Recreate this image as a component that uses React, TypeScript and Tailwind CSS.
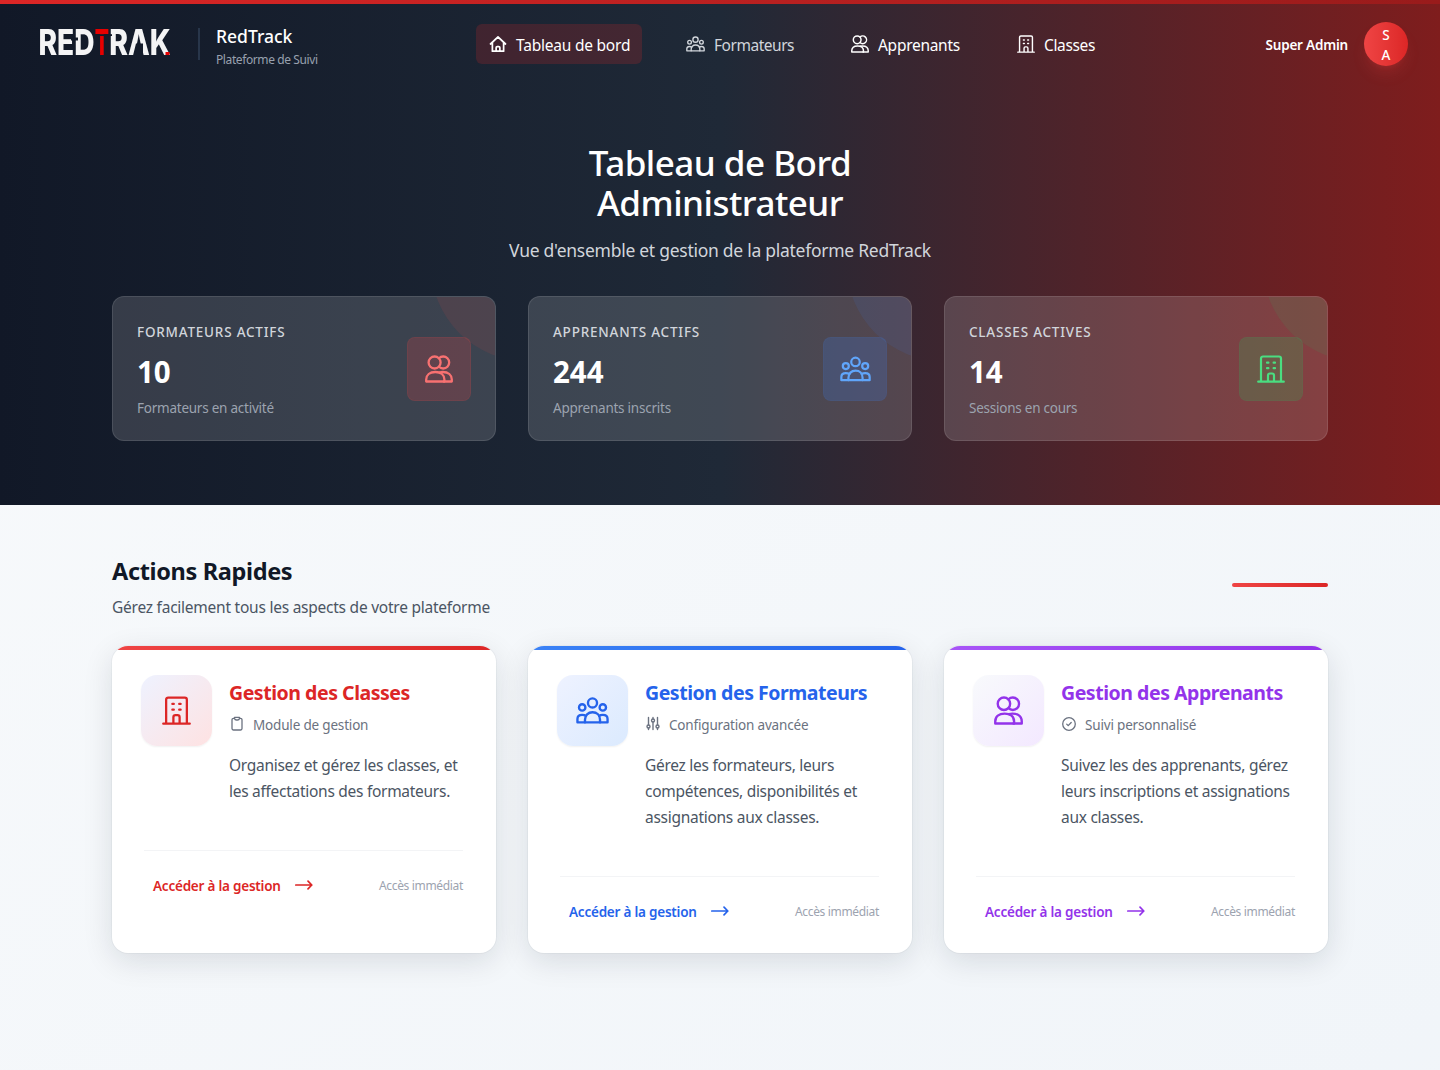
import React from "react";

type IconProps = { className?: string };

const stroke = {
  fill: "none",
  stroke: "currentColor",
  strokeLinecap: "round" as const,
  strokeLinejoin: "round" as const,
};

const HomeIcon = ({ className }: IconProps) => (
  <svg {...stroke} viewBox="0 0 24 24" strokeWidth={2.3} className={className}>
    <path d="M2 12 12 2.500 22 12M4.500 10v11.500h15V10M9.500 21.500V17a1.500 1.500 0 0 1 1.500-1.500h2A1.500 1.500 0 0 1 14.500 17v4.500" />
  </svg>
);

const GroupIcon = ({ className }: IconProps) => (
  <svg {...stroke} viewBox="0 0 32 26" className={`stroke-[2.3] ${className}`}>
    <circle cx="16" cy="5.700" r="4.400" />
    <circle cx="6" cy="10" r="3.100" />
    <circle cx="26" cy="10" r="3.100" />
    <path d="M8.700 24.500v-2.500c0-4.300 3-7.300 7.300-7.300s7.300 3 7.300 7.300v2.500z" />
    <path d="M8.700 24.500H1.400v-3.300c0-2.600 1.800-3.900 4.600-3.900 1.600 0 2.800.3 3.600 1M23.300 24.500h7.300v-3.300c0-2.600-1.800-3.900-4.600-3.900-1.600 0-2.800.3-3.600 1" />
  </svg>
);

const UsersIcon = ({ className }: IconProps) => (
  <svg {...stroke} viewBox="0 0 28 28" className={`stroke-[2.3] ${className}`}>
    <circle cx="9.600" cy="7.500" r="6" />
    <path d="M14 3.200a6 6 0 1 1 0 8.600" />
    <path d="M1.200 26.500v-2c0-4.500 3.600-7.500 9.100-7.500s9.100 3 9.100 7.500v2z" />
    <path d="M14.500 17.500c1-.3 2.100-.5 3.200-.5 5.500 0 9.100 3 9.100 7.500v2h-8" />
  </svg>
);

const BuildingIcon = ({ className }: IconProps) => (
  <svg {...stroke} viewBox="0 0 28 28" className={`stroke-[2.2] ${className}`}>
    <path d="M1.200 26.700h25.600M4 26.700V3.500a2 2 0 0 1 2-2h16a2 2 0 0 1 2 2v23.200M11 26.700v-6.200a2 2 0 0 1 2-2h2a2 2 0 0 1 2 2v6.200" />
    <path d="M10 7.700h1.400M16.600 7.700H18M10 13.200h1.400M16.600 13.200H18" />
  </svg>
);

const ClipboardIcon = ({ className }: IconProps) => (
  <svg {...stroke} viewBox="0 0 16 16" strokeWidth={1.300} className={className}>
    <path d="M5.500 2.300h-1A1.500 1.500 0 0 0 3 3.800v8.700A1.500 1.500 0 0 0 4.500 14h7a1.500 1.500 0 0 0 1.500-1.500V3.800a1.500 1.500 0 0 0-1.500-1.500h-1" />
    <path d="M5.500 1.300h5V2.500a2 2 0 0 1-2 1.500h-1a2 2 0 0 1-2-1.500z" />
  </svg>
);

const SlidersIcon = ({ className }: IconProps) => (
  <svg {...stroke} viewBox="0 0 16 16" strokeWidth={1.400} className={className}>
    <path d="M3.500 1.500v7.200M3.500 12.300v1.200M8 1.500v1.300M8 6v7.500M12.500 1.500v7.200M12.500 12.300v1.200" />
    <circle cx="3.500" cy="10.500" r="1.500" />
    <circle cx="8" cy="4.500" r="1.500" />
    <circle cx="12.500" cy="10.500" r="1.500" />
  </svg>
);

const CheckIcon = ({ className }: IconProps) => (
  <svg {...stroke} viewBox="0 0 16 16" strokeWidth={1.300} className={className}>
    <circle cx="8" cy="8" r="6.300" />
    <path d="m5.700 8.100 1.500 1.500 3-3.100" />
  </svg>
);

const ArrowIcon = ({ className }: IconProps) => (
  <svg {...stroke} viewBox="0 0 20 16" strokeWidth={1.700} className={className}>
    <path d="M1.800 8h16M14 4.200 17.800 8 14 11.800" />
  </svg>
);

const Logo = () => (
  <svg viewBox="0 0 130 26" className="h-[26px] w-[130px] shrink-0 overflow-visible font-['Inter'] text-[35.500px] font-extrabold">
    <mask id="stencil" maskUnits="userSpaceOnUse" x="-2" y="-10" width="140" height="46">
      <rect x="-2" y="-10" width="140" height="46" fill="white" />
      <rect x="31" y="8.500" width="7" height="3" fill="black" />
      <rect x="53" y="5.200" width="19" height="1.800" fill="black" />
      <path d="M96 14.500h7v12H93z" fill="black" />
    </mask>
    <g mask="url(#stencil)">
      <text x="-1.500" y="26" textLength="56" lengthAdjust="spacingAndGlyphs" fill="#f4f4f5">RED</text>
      <text x="54.700" y="26" textLength="14.300" lengthAdjust="spacingAndGlyphs" fill="#e60000">T</text>
      <text x="69.200" y="26" textLength="61.500" lengthAdjust="spacingAndGlyphs" fill="#f4f4f5">RAK</text>
    </g>
    <rect x="125.500" y="23" width="4" height="3" fill="#e60000" />
  </svg>
);

const nav = [
  { label: "Tableau de bord", Icon: HomeIcon, box: "w-[166px] bg-[#dc2626]/20 text-white", icon: "size-[18px]", ls: "tracking-[-0.220px]" },
  { label: "Formateurs", Icon: GroupIcon, box: "w-[132px] text-[#d1d5db]", icon: "h-[16px] w-[19px]", ls: "-ml-px mr-px tracking-[-0.470px]" },
  { label: "Apprenants", Icon: UsersIcon, box: "w-[134px] text-white", icon: "size-[18px]", ls: "tracking-[-0.280px]" },
  { label: "Classes", Icon: BuildingIcon, box: "w-[103px] text-white", icon: "size-[18px]", ls: "tracking-[-0.350px]" },
];

const stats = [
  { label: "FORMATEURS ACTIFS", value: "10", note: "Formateurs en activité", Icon: UsersIcon, icon: "size-7", box: "border-[#ef4444]/10 bg-[#ef4444]/20 text-[#f87171]", circle: "bg-[#ef4444]/10" },
  { label: "APPRENANTS ACTIFS", value: "244", note: "Apprenants inscrits", Icon: GroupIcon, icon: "h-[26px] w-[31px]", box: "border-[#3b82f6]/5 bg-[#3b82f6]/20 text-[#60a5fa]", circle: "bg-[#3b82f6]/10" },
  { label: "CLASSES ACTIVES", value: "14", note: "Sessions en cours", Icon: BuildingIcon, icon: "size-7", box: "border-[#22c55e]/5 bg-[#22c55e]/20 text-[#4ade80]", circle: "bg-[#22c55e]/10" },
];

const actions = [
  {
    title: "Gestion des Classes",
    sub: "Module de gestion",
    lines: ["Organisez et gérez les classes, et", "les affectations des formateurs."],
    Icon: BuildingIcon, Sub: ClipboardIcon, icon: "size-[29px]",
    bar: "from-[#ef4444] to-[#dc2626]", tint: "from-[#eef2ff] to-[#fee2e2]", color: "text-[#dc2626]",
  },
  {
    title: "Gestion des Formateurs",
    sub: "Configuration avancée",
    lines: ["Gérez les formateurs, leurs", "compétences, disponibilités et", "assignations aux classes."],
    Icon: GroupIcon, Sub: SlidersIcon, icon: "h-[27px] w-[33px]",
    bar: "from-[#3b82f6] to-[#2563eb]", tint: "from-[#eef2ff] to-[#dbeafe]", color: "text-[#2563eb]",
  },
  {
    title: "Gestion des Apprenants",
    sub: "Suivi personnalisé",
    lines: ["Suivez les des apprenants, gérez", "leurs inscriptions et assignations", "aux classes."],
    Icon: UsersIcon, Sub: CheckIcon, icon: "size-[29px]",
    bar: "from-[#a855f7] to-[#9333ea]", tint: "from-[#f8fafc] to-[#f3e8ff]", color: "text-[#9333ea]",
  },
];

export default function App() {
  return (
    <div className="flex h-[1070px] flex-col overflow-hidden bg-linear-to-br from-slate-50 to-slate-100 font-['Noto_Sans',sans-serif]">
      <div className="h-[505px] shrink-0 bg-linear-to-r/srgb from-[#111827] via-[#1f2937] to-[#7f1d1d]">
        <div className="h-1 bg-linear-to-r/srgb from-[#dc2626] to-[#991b1b]" />
        <header className="flex h-[85px] items-start pt-[18px] pr-8 pl-10">
          <div className="flex w-[436px] items-start">
            <div className="pt-[7px]"><Logo /></div>
            <div className="mt-1.5 ml-7 h-8 w-0.5 bg-slate-700/70" />
            <div className="ml-4 pt-1">
              <div className="text-[17.500px] leading-5 font-medium text-white">RedTrack</div>
              <div className="mt-1 text-[12px] leading-5 tracking-[-0.400px] text-gray-400">Plateforme de Suivi</div>
            </div>
          </div>
          <nav className="mt-0.5 flex items-center gap-8">
            {nav.map(({ label, Icon, box, icon, ls }) => (
              <a key={label} className={`flex h-10 items-center gap-[9px] rounded-md pl-[13px] text-[15.500px] whitespace-nowrap ${ls} ${box}`}>
                <Icon className={`shrink-0 ${icon}`} />
                <span className="pt-[3px]">{label}</span>
              </a>
            ))}
          </nav>
          <div className="ml-auto flex items-center gap-4">
            <span className="pt-[3px] text-[13.500px] font-semibold tracking-[-0.200px] text-white">Super Admin</span>
            <span className="flex size-11 items-center justify-center rounded-full bg-linear-to-r from-[#ef4444] to-[#dc2626] pt-0.5 text-center text-[13.500px] leading-5 font-medium text-white shadow-lg shadow-[#ef4444]/20">
              S<br />A
            </span>
          </div>
        </header>

        <section className="px-28 pt-[54px]">
          <h1 className="text-center text-[35px] leading-10 font-medium tracking-[-0.520px] text-white">Tableau de Bord<br />Administrateur</h1>
          <p className="mt-[13px] text-center text-[17.500px] leading-7 tracking-[-0.270px] text-[#d1d5db]">Vue d'ensemble et gestion de la plateforme RedTrack</p>
          <div className="mt-8 grid grid-cols-3 gap-8">
            {stats.map(({ label, value, note, Icon, icon, box, circle }) => (
              <div key={label} className="relative flex h-[145px] items-center justify-between overflow-hidden rounded-xl border border-white/10 bg-white/15 px-6">
                <div className={`absolute -top-32 -right-32 size-48 rounded-full ${circle}`} />
                <div className="pt-[3px]">
                  <div className="text-[13.500px] leading-5 font-medium tracking-[0.780px] text-[#d1d5db]">{label}</div>
                  <div className="mt-3 text-[29.500px] leading-9 font-bold text-white">{value}</div>
                  <div className="mt-2 text-[13.500px] leading-5 tracking-[-0.240px] text-[#9ca3af]">{note}</div>
                </div>
                <div className={`relative flex size-16 items-center justify-center rounded-lg border ${box}`}>
                  <Icon className={icon} />
                </div>
              </div>
            ))}
          </div>
        </section>
      </div>

      <main className="px-28 pt-[50px]">
        <div className="flex items-center justify-between">
          <div>
            <h2 className="text-[23.500px] leading-8 font-bold tracking-[-0.350px] text-[#111827]">Actions Rapides</h2>
            <p className="mt-2 text-[15.500px] leading-6 tracking-[-0.240px] text-[#4b5563]">Gérez facilement tous les aspects de votre plateforme</p>
          </div>
          <div className="mb-4 h-1 w-24 translate-y-1.5 rounded-full bg-linear-to-r from-[#ef4444] to-[#dc2626]" />
        </div>
        <div className="mt-[27px] grid grid-cols-3 gap-8">
          {actions.map(({ title, sub, lines, Icon, Sub, icon, bar, tint, color }) => (
            <article key={title} className="relative h-[307px] overflow-hidden rounded-2xl bg-white pt-1 shadow-[0_0_0_1px_rgba(15,23,42,0.03),0_8px_30px_rgba(15,23,42,0.12)]">
              <div className={`absolute inset-x-0 top-0 h-1 bg-linear-to-r ${bar}`} />
              <div className="flex gap-[17px] pt-[25px] pl-[29px]">
                <div className={`flex size-[71px] shrink-0 items-center justify-center rounded-2xl bg-linear-to-br shadow-[0_1px_2px_rgba(0,0,0,0.06)] ${tint} ${color}`}>
                  <Icon className={icon} />
                </div>
                <div className="pt-1">
                  <h3 className={`text-[19.500px] leading-7 font-bold tracking-[-0.460px] whitespace-nowrap ${color}`}>{title}</h3>
                  <div className="mt-[7px] flex h-5 items-center gap-2 text-[#6b7280]">
                    <Sub className="size-4 shrink-0" />
                    <span className="pt-[3px] text-[13.500px] tracking-[-0.180px]">{sub}</span>
                  </div>
                  <div className="mt-[18px] text-[15.500px] leading-[26px] tracking-[-0.280px] whitespace-nowrap text-[#4b5563]">
                    {lines.map((line) => <div key={line}>{line}</div>)}
                  </div>
                </div>
              </div>
              <div className="mr-[33px] ml-8 mt-[46px] flex items-center justify-between border-t border-gray-100 pt-[25px] pl-[9px]">
                <span className={`flex items-center gap-[13px] text-[13.500px] leading-5 font-semibold tracking-[-0.220px] ${color}`}>
                  Accéder à la gestion
                  <ArrowIcon className="-mt-0.5 h-4 w-5" />
                </span>
                <span className="text-[12px] tracking-[-0.330px] text-[#9ca3af]">Accès immédiat</span>
              </div>
            </article>
          ))}
        </div>
      </main>
    </div>
  );
}
